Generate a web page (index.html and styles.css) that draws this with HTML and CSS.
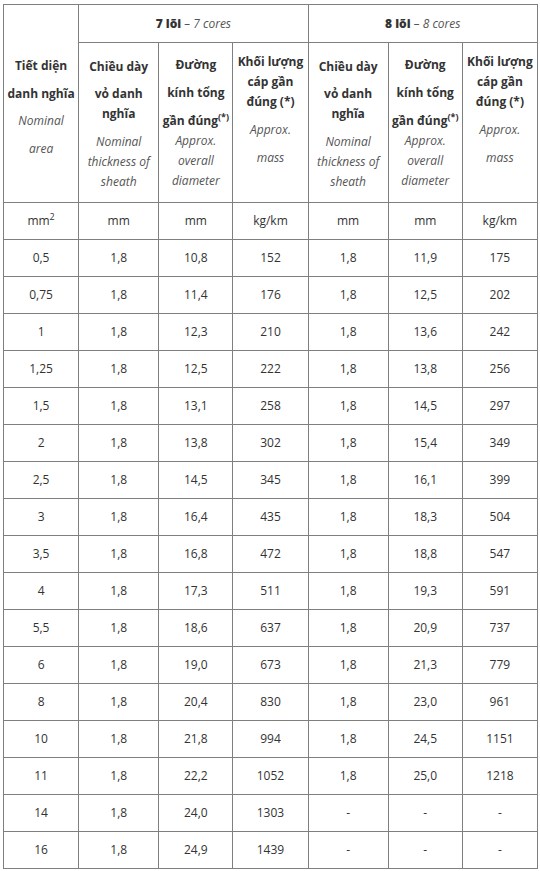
FILE: index.html
```html
<!DOCTYPE html>
<html lang="vi">
<head>
<meta charset="utf-8">
<title>Cable table</title>
<link rel="stylesheet" href="styles.css">
</head>
<body>
<table class="spec">
  <colgroup>
    <col class="c1"><col class="c2"><col class="c3"><col class="c4"><col class="c2"><col class="c3"><col class="c4">
  </colgroup>
  <thead>
    <tr class="r-group">
      <th rowspan="2" class="h-area">
        <div class="hbox hbox-area">
          <span class="ln">Tiết diện</span>
          <span class="ln gap">danh nghĩa</span>
          <em class="ln gap7">Nominal</em>
          <em class="ln gap">area</em>
        </div>
      </th>
      <th colspan="3"><div class="gbox"><strong>7 lõi</strong>&nbsp;<em>– 7 cores</em></div></th>
      <th colspan="3"><div class="gbox"><strong>8 lõi</strong>&nbsp;<em>– 8 cores</em></div></th>
    </tr>
    <tr class="r-head">
      <th>
        <div class="hbox hbox-thick">
          <span class="ln">Chiều dày</span>
          <span class="ln gap7">vỏ danh</span>
          <span class="ln">nghĩa</span>
          <em class="ln gap">Nominal</em>
          <em class="ln">thickness of</em>
          <em class="ln">sheath</em>
        </div>
      </th>
      <th>
        <div class="hbox">
          <span class="ln">Đường</span>
          <span class="ln gap">kính tổng</span>
          <span class="ln gap">gần đúng<sup>(*)</sup></span>
          <em class="ln">Approx.</em>
          <em class="ln">overall</em>
          <em class="ln">diameter</em>
        </div>
      </th>
      <th>
        <div class="hbox hbox-mass">
          <span class="ln">Khối lượng</span>
          <span class="ln">cáp gần</span>
          <span class="ln">đúng (*)</span>
          <em class="ln gap">Approx.</em>
          <em class="ln gap">mass</em>
        </div>
      </th>
      <th>
        <div class="hbox hbox-thick">
          <span class="ln">Chiều dày</span>
          <span class="ln gap7">vỏ danh</span>
          <span class="ln">nghĩa</span>
          <em class="ln gap">Nominal</em>
          <em class="ln">thickness of</em>
          <em class="ln">sheath</em>
        </div>
      </th>
      <th>
        <div class="hbox">
          <span class="ln">Đường</span>
          <span class="ln gap">kính tổng</span>
          <span class="ln gap">gần đúng<sup>(*)</sup></span>
          <em class="ln">Approx.</em>
          <em class="ln">overall</em>
          <em class="ln">diameter</em>
        </div>
      </th>
      <th>
        <div class="hbox hbox-mass">
          <span class="ln">Khối lượng</span>
          <span class="ln">cáp gần</span>
          <span class="ln">đúng (*)</span>
          <em class="ln gap">Approx.</em>
          <em class="ln gap">mass</em>
        </div>
      </th>
    </tr>
  </thead>
  <tbody>
    <tr class="r-unit"><td>mm<sup>2</sup></td><td>mm</td><td>mm</td><td>kg/km</td><td>mm</td><td>mm</td><td>kg/km</td></tr>
    <tr><td>0,5</td><td>1,8</td><td>10,8</td><td>152</td><td>1,8</td><td>11,9</td><td>175</td></tr>
    <tr><td>0,75</td><td>1,8</td><td>11,4</td><td>176</td><td>1,8</td><td>12,5</td><td>202</td></tr>
    <tr><td>1</td><td>1,8</td><td>12,3</td><td>210</td><td>1,8</td><td>13,6</td><td>242</td></tr>
    <tr><td>1,25</td><td>1,8</td><td>12,5</td><td>222</td><td>1,8</td><td>13,8</td><td>256</td></tr>
    <tr><td>1,5</td><td>1,8</td><td>13,1</td><td>258</td><td>1,8</td><td>14,5</td><td>297</td></tr>
    <tr><td>2</td><td>1,8</td><td>13,8</td><td>302</td><td>1,8</td><td>15,4</td><td>349</td></tr>
    <tr><td>2,5</td><td>1,8</td><td>14,5</td><td>345</td><td>1,8</td><td>16,1</td><td>399</td></tr>
    <tr><td>3</td><td>1,8</td><td>16,4</td><td>435</td><td>1,8</td><td>18,3</td><td>504</td></tr>
    <tr><td>3,5</td><td>1,8</td><td>16,8</td><td>472</td><td>1,8</td><td>18,8</td><td>547</td></tr>
    <tr><td>4</td><td>1,8</td><td>17,3</td><td>511</td><td>1,8</td><td>19,3</td><td>591</td></tr>
    <tr><td>5,5</td><td>1,8</td><td>18,6</td><td>637</td><td>1,8</td><td>20,9</td><td>737</td></tr>
    <tr><td>6</td><td>1,8</td><td>19,0</td><td>673</td><td>1,8</td><td>21,3</td><td>779</td></tr>
    <tr><td>8</td><td>1,8</td><td>20,4</td><td>830</td><td>1,8</td><td>23,0</td><td>961</td></tr>
    <tr><td>10</td><td>1,8</td><td>21,8</td><td>994</td><td>1,8</td><td>24,5</td><td>1151</td></tr>
    <tr><td>11</td><td>1,8</td><td>22,2</td><td>1052</td><td>1,8</td><td>25,0</td><td>1218</td></tr>
    <tr><td>14</td><td>1,8</td><td>24,0</td><td>1303</td><td>-</td><td>-</td><td>-</td></tr>
    <tr><td>16</td><td>1,8</td><td>24,9</td><td>1439</td><td>-</td><td>-</td><td>-</td></tr>
  </tbody>
</table>
</body>
</html>
```

FILE: styles.css
```css
html, body {
  margin: 0;
  padding: 0;
  background: #ffffff;
}

body {
  padding: 4px 3px 0 3px;
  font-family: "Open Sans", "Noto Sans", sans-serif;
  font-size: 12px;
  color: #333333;
}

.spec {
  border-collapse: collapse;
  table-layout: fixed;
  width: 535px;
}

.c1 { width: 75px; }
.c2 { width: 80px; }
.c3 { width: 74px; }
.c4 { width: 75px; }

.spec th,
.spec td {
  border: 1px solid #7f7f7f;
  padding: 0;
  text-align: center;
  vertical-align: middle;
}

.spec th {
  font-weight: 700;
  line-height: 20px;
}

.spec em {
  font-style: italic;
  font-weight: 400;
  color: #555555;
}

.gbox {
  height: 37px;
  display: flex;
  align-items: center;
  justify-content: center;
}

.hbox {
  box-sizing: border-box;
  height: 159px;
  display: flex;
  flex-direction: column;
  justify-content: center;
  overflow: hidden;
}

.hbox-area {
  height: 197px;
  padding-top: 8px;
}

.hbox-thick {
  padding-top: 3px;
}

.hbox-mass::after {
  content: "";
  display: block;
  height: 25px;
}

.ln {
  display: block;
}

.gap {
  margin-top: 8px;
}

.gap7 {
  margin-top: 7px;
}

.spec sup {
  font-size: 9px;
  line-height: 0;
  vertical-align: 5px;
}

.spec td {
  height: 36px;
  line-height: 20px;
}
```
